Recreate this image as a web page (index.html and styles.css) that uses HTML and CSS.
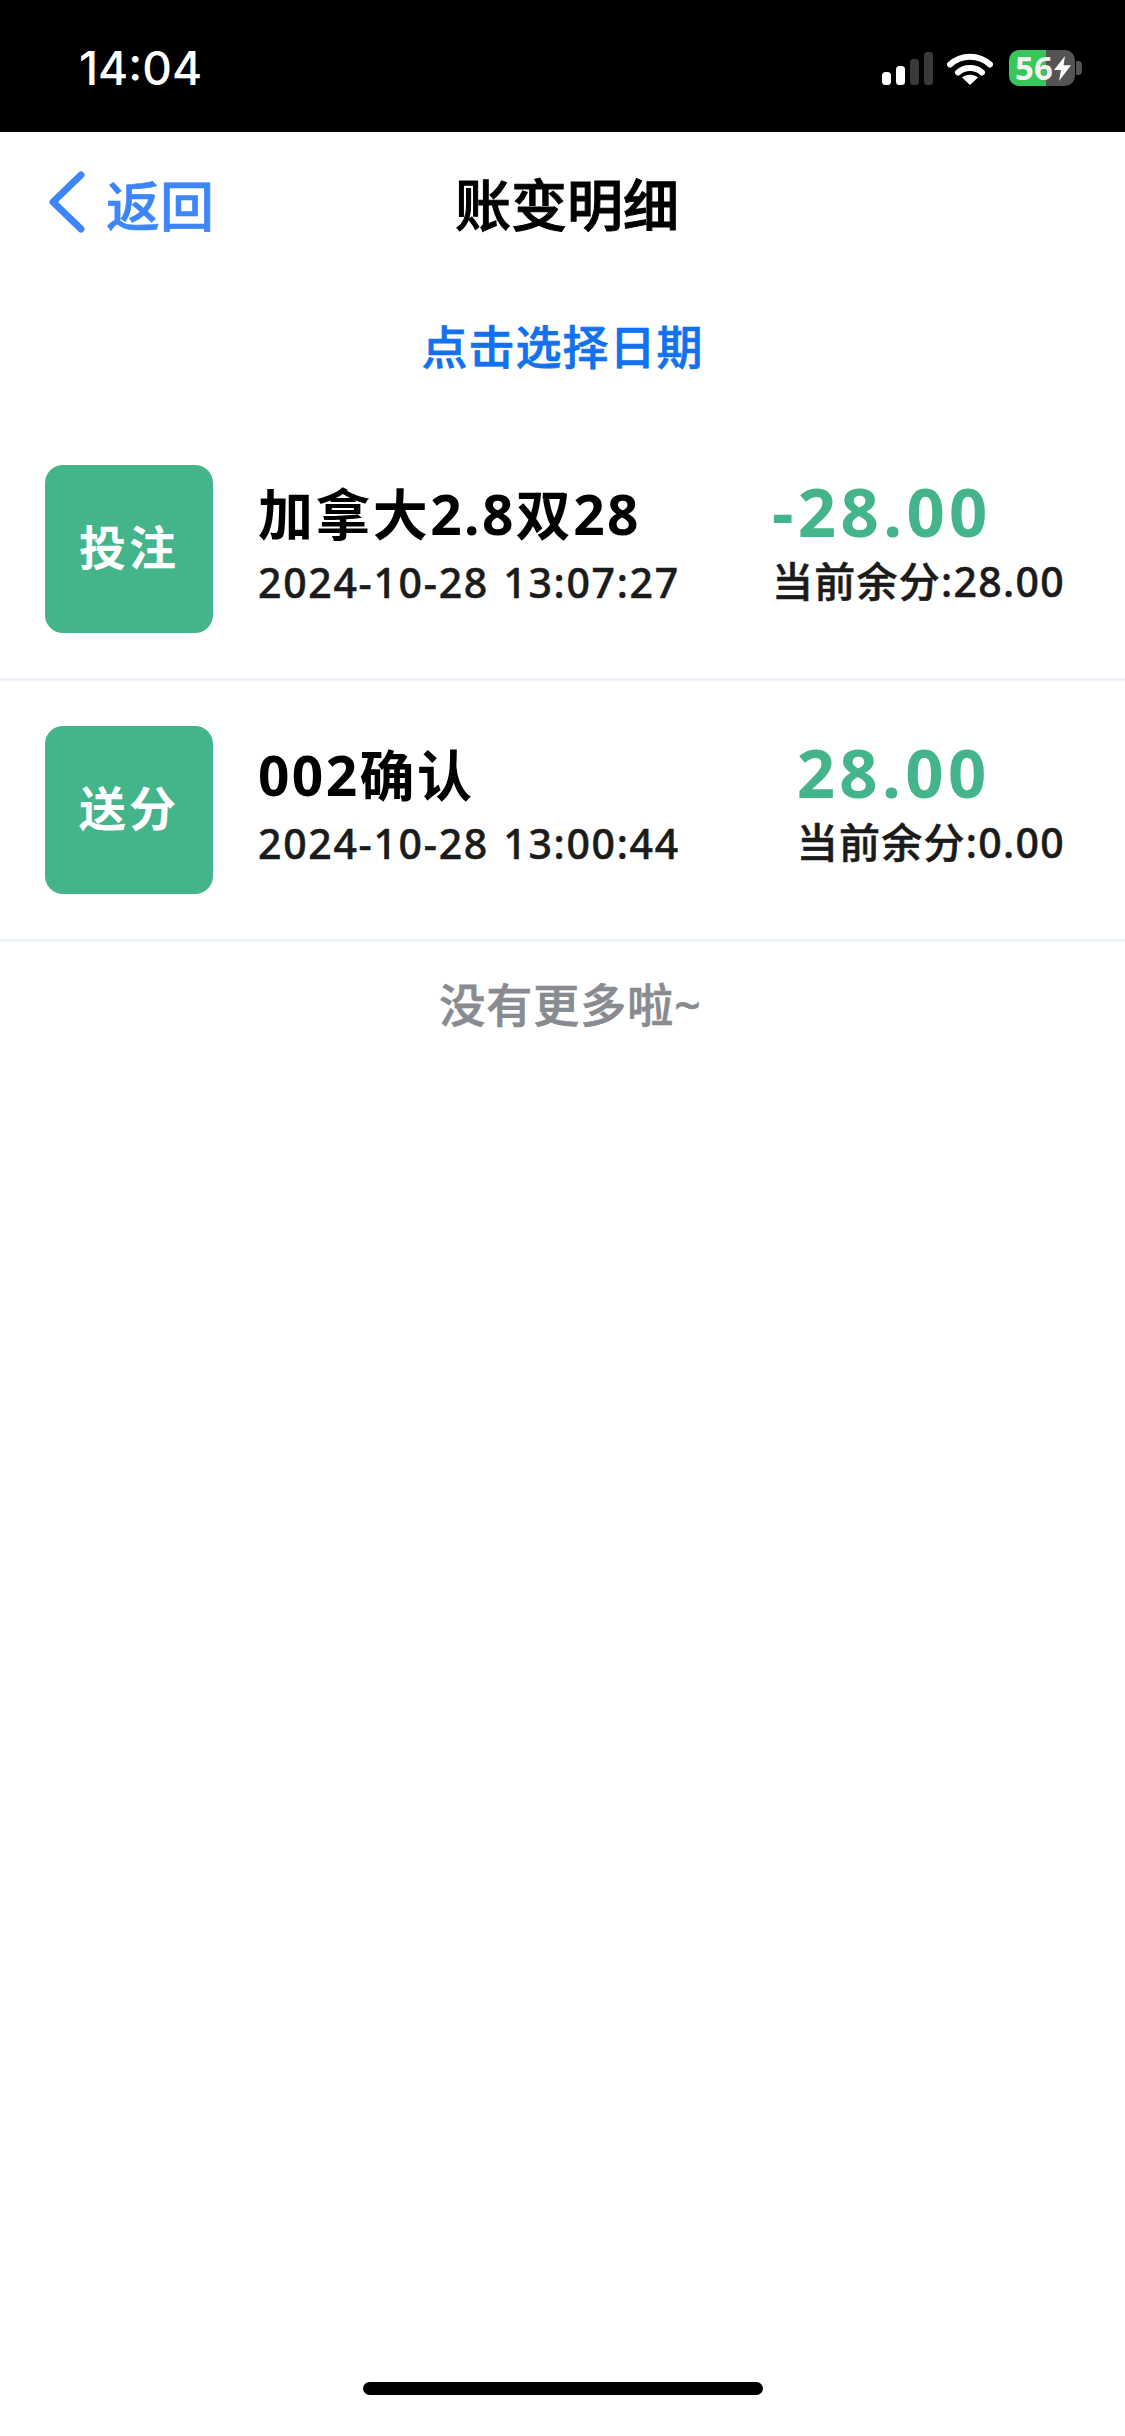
FILE: index.html
```html
<!DOCTYPE html>
<html lang="zh-CN">
<head>
	<meta charset="UTF-8">
	<title>账变明细</title>
	<link rel="stylesheet" href="styles.css">
</head>
<body>
	<!-- 状态栏 -->
	<div class="status">
		<span class="time">14:04</span>
		<div class="status-icons">
			<svg class="signal" width="52" height="33" viewBox="0 0 52 33">
				<rect x="0" y="20" width="9" height="13" rx="3.5" fill="#fff"/>
				<rect x="14" y="14" width="9" height="19" rx="3.5" fill="#fff"/>
				<rect x="28" y="7" width="9" height="26" rx="3.5" fill="#3a3a3a"/>
				<rect x="42" y="0" width="9" height="33" rx="3.5" fill="#3a3a3a"/>
			</svg>
			<svg class="wifi" width="46" height="33" viewBox="0 0 46 33">
				<path d="M3 12.5C14 2 32 2 43 12.5" fill="none" stroke="#fff" stroke-width="6" stroke-linecap="round"/>
				<path d="M11 20.5C17.5 14.500 28.500 14.500 35 20.5" fill="none" stroke="#fff" stroke-width="6" stroke-linecap="round"/>
				<path d="M23 33L15 25.500C19.500 21.800 26.500 21.800 31 25.500Z" fill="#fff"/>
			</svg>
			<div class="battery">
				<span class="battery-num">56</span>
				<svg width="17" height="25" viewBox="0 0 17 27" preserveAspectRatio="none">
					<path d="M11 0L0 15H7L5 27L17 10H9.500Z" fill="#fff"/>
				</svg>
			</div>
			<span class="battery-cap"></span>
		</div>
	</div>

	<!-- 顶部导航 -->
	<div class="nav">
		<a href="#" class="back">
			<svg width="38" height="64" viewBox="0 0 38 64">
				<path d="M33 5L5 32L33 59" fill="none" stroke="#3d85fb" stroke-width="7" stroke-linecap="round" stroke-linejoin="round"/>
			</svg>
			<span class="back-text">返回</span>
		</a>
		<h1 class="title">账变明细</h1>
	</div>

	<a href="#" class="pick-date">点击选择日期</a>

	<!-- 账变列表 -->
	<ul class="list">
		<li>
			<div class="tag">投注</div>
			<div class="info">
				<p class="name">加拿大2.8双28</p>
				<p class="date">2024-10-28 13:07:27</p>
			</div>
			<div class="money">
				<p class="amount">-28.00</p>
				<p class="rest">当前余分:28.00</p>
			</div>
		</li>
		<li>
			<div class="tag">送分</div>
			<div class="info">
				<p class="name">002确认</p>
				<p class="date">2024-10-28 13:00:44</p>
			</div>
			<div class="money">
				<p class="amount">28.00</p>
				<p class="rest">当前余分:0.00</p>
			</div>
		</li>
	</ul>
	<p class="no-more">没有更多啦~</p>

	<div class="home-bar"></div>
</body>
</html>
```

FILE: styles.css
```css
*{
	margin: 0;
	padding: 0;
	box-sizing: border-box;
}
ul{
	list-style: none;
}
a{
	text-decoration: none;
}
body{
	width: 1125px;
	height: 2436px;
	background: #ffffff;
	display: flex;
	flex-direction: column;
	overflow: hidden;
	font-family: "Noto Sans", "Noto Sans CJK SC", sans-serif;
}
/* 状态栏 */
.status{
	height: 132px;
	flex-shrink: 0;
	background: #000000;
	display: flex;
	justify-content: space-between;
	align-items: center;
	padding: 4px 43px 0 79px;
	color: #ffffff;
}
.time{
	font: 500 46px/52px Inter, sans-serif;
}
.status-icons{
	display: flex;
	align-items: center;
}
.wifi{
	margin-left: 13px;
}
.battery{
	width: 66px;
	height: 36px;
	margin-left: 16px;
	border-radius: 10px;
	background: linear-gradient(to right, #36c759 56%, #545454 56%);
	display: flex;
	align-items: center;
	padding-left: 6px;
	gap: 1px;
}
.battery-num{
	font-size: 33px;
	font-weight: 700;
	line-height: 36px;
	color: #f2f2f2;
}
.battery-cap{
	width: 6px;
	height: 14px;
	margin-left: 1px;
	border-radius: 0 4px 4px 0;
	background: #545454;
}
/* 导航 */
.nav{
	height: 128px;
	flex-shrink: 0;
	position: relative;
	display: flex;
	justify-content: center;
	align-items: center;
	padding: 16px 0 0 9px;
}
.back{
	position: absolute;
	left: 48px;
	top: 34px;
	display: flex;
	align-items: center;
	gap: 20px;
	color: #3d85fb;
	font-size: 54px;
	font-weight: 500;
	line-height: 64px;
}
.back-text{
	padding-top: 8px;
	-webkit-text-stroke: 0.6px #3d85fb;
}
.title{
	font-size: 56px;
	line-height: 64px;
	font-weight: 500;
	-webkit-text-stroke: 1px #000000;
	color: #000000;
}
.pick-date{
	height: 160px;
	flex-shrink: 0;
	padding-top: 7px;
	display: flex;
	justify-content: center;
	align-items: center;
	color: #1271ee;
	font-size: 46px;
	font-weight: 500;
	letter-spacing: 1px;
	-webkit-text-stroke: 0.7px #1271ee;
}
/* 列表 */
.list li{
	height: 261px;
	padding: 45px 60px 0 45px;
	border-bottom: 3px solid #edf2fd;
	display: flex;
	align-items: flex-start;
}
.tag{
	width: 168px;
	height: 168px;
	flex-shrink: 0;
	padding-bottom: 10px;
	border-radius: 18px;
	background: #44b48a;
	color: #ffffff;
	font-size: 47px;
	font-weight: 700;
	letter-spacing: 3px;
	display: flex;
	justify-content: center;
	align-items: center;
}
.info{
	margin-left: 45px;
	padding-top: 13px;
}
.name{
	font-size: 55px;
	font-weight: 700;
	line-height: 72px;
	letter-spacing: 2.4px;
	color: #000000;
}
.date{
	margin-top: 4px;
	font-size: 41px;
	font-weight: 500;
	line-height: 56px;
	letter-spacing: 1.7px;
	word-spacing: 2px;
	-webkit-text-stroke: 0.5px #1b1b1b;
	color: #1b1b1b;
}
.money{
	margin-left: auto;
	padding-top: 10px;
}
.amount{
	font-size: 67px;
	font-weight: 700;
	line-height: 72px;
	letter-spacing: 4.4px;
	color: #44b48a;
}
.rest{
	margin-top: 6px;
	font-size: 41px;
	font-weight: 500;
	line-height: 56px;
	letter-spacing: 1.3px;
	-webkit-text-stroke: 0.5px #1b1b1b;
	color: #1b1b1b;
}
.no-more{
	margin-top: 30px;
	padding-left: 16px;
	text-align: center;
	font-size: 46px;
	font-weight: 500;
	line-height: 64px;
	letter-spacing: 1px;
	-webkit-text-stroke: 0.7px #898b90;
	color: #898b90;
}
.home-bar{
	width: 400px;
	height: 13px;
	margin: auto auto 41px;
	border-radius: 7px;
	background: #000000;
}
```
